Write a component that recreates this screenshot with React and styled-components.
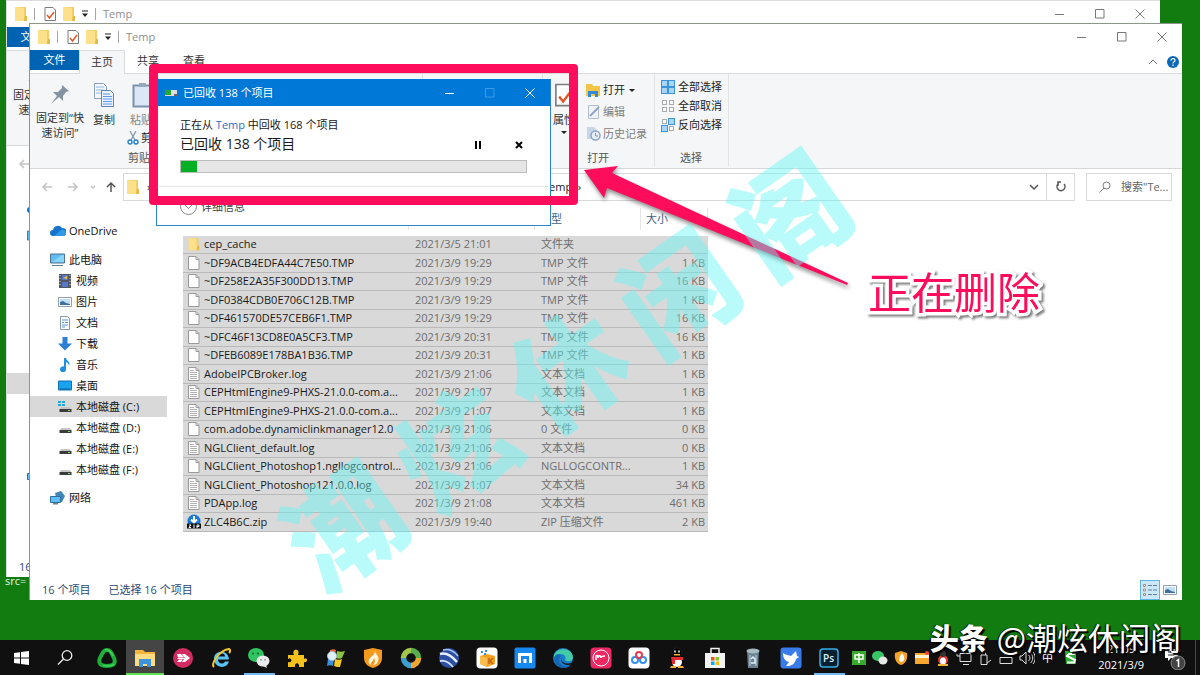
import React from 'react';
import styled, { createGlobalStyle, css } from 'styled-components';

const GlobalStyle = createGlobalStyle`
  * { box-sizing: border-box; }
  body {
    margin: 0;
    background: #127c10;
    font: 11px/16px "Open Sans", "Noto Sans CJK SC", sans-serif;
    color: #1a1a1a;
  }
  button, input {
    font: inherit;
    color: inherit;
    border: 0;
    padding: 0;
    background: none;
  }
  svg { display: block; flex: none; }
`;

/* ---------- icons ---------- */

const FolderIcon = ({ size = 16 }) => (
  <svg width={size} height={size} viewBox="0 0 16 16">
    <path d="M2 1h11v12l-1 2H2z" fill="#f2cf66" />
    <path d="M2 1l9 1v13H2z" fill="#fde08a" />
    <path d="M12 10h2v5h-3z" fill="#e3b94b" />
  </svg>
);

const CheckDocIcon = ({ size = 16 }) => (
  <svg width={size} height={size} viewBox="0 0 16 16" fill="none">
    <path d="M3 1.500h8l2.500 2.500v10.500H3z" fill="#fff" stroke="#7b7b7b" />
    <path d="M5 9l2.500 3L12 6" stroke="#df5a2b" strokeWidth="1.500" />
  </svg>
);

const MenuCaret = () => (
  <svg width="10" height="8" viewBox="0 0 10 8">
    <path d="M2 0.500h6v1H2zM2 3.500h6L5 7z" fill="#222" />
  </svg>
);

const MinIcon = () => (
  <svg width="10" height="10" viewBox="0 0 10 10"><path d="M0 5.500h9" stroke="currentColor" /></svg>
);
const MaxIcon = () => (
  <svg width="10" height="10" viewBox="0 0 10 10"><path d="M.5.5h8.500v8.500H.5z" fill="none" stroke="currentColor" /></svg>
);
const CloseIcon = () => (
  <svg width="10" height="10" viewBox="0 0 10 10"><path d="M.5.5l9 9M9.500.5l-9 9" fill="none" stroke="currentColor" /></svg>
);

const PinIcon = () => (
  <svg width="24" height="24" viewBox="0 0 24 24">
    <path d="M14 3l7 6-3 1-3 4v5l-4-4-8 7 6-8-4-4h5l4-4z" fill="#8593a1" />
  </svg>
);

const CopyIcon = () => (
  <svg width="24" height="26" viewBox="0 0 24 26" fill="none">
    <path d="M2.500 1.500h9l3 3v12h-12z" fill="#f4f8fd" stroke="#8ca0b8" />
    <path d="M4 5h8M4 8h8M4 11h8" stroke="#8fb6e8" />
    <path d="M9.500 8.500h9l3 3v13h-12z" fill="#eaf3fd" stroke="#5f84b5" />
    <path d="M11 12h7M11 14.500h9M11 17h9M11 19.500h9M11 22h9" stroke="#5b9ae6" />
  </svg>
);

const PasteIcon = () => (
  <svg width="24" height="26" viewBox="0 0 24 26" fill="none">
    <path d="M4.500 3.500h18v21h-18z" fill="#dbe7f5" stroke="#7d92ad" strokeWidth="2" />
    <path d="M10 1h7v4h-7z" fill="#98a8bb" />
  </svg>
);

const CutIcon = () => (
  <svg width="12" height="14" viewBox="0 0 12 14" fill="none">
    <path d="M3 0l5 9M9 0L4 9" stroke="#8597a8" strokeWidth="1.300" />
    <circle cx="3" cy="11" r="2" stroke="#2580cf" strokeWidth="1.400" />
    <circle cx="9" cy="11" r="2" stroke="#2580cf" strokeWidth="1.400" />
  </svg>
);

const OpenIcon = () => (
  <svg width="16" height="14" viewBox="0 0 16 14">
    <path d="M1 1h6l1 2h7v10H1z" fill="#f3c544" />
    <path d="M3 14V8h10v6h-3v-3H6v3z" fill="#2f8ade" />
  </svg>
);

const EditIcon = () => (
  <svg width="16" height="14" viewBox="0 0 16 14" fill="none">
    <path d="M3.500.5h10v13h-10z" fill="#f0f4fa" stroke="#b3bfd0" />
    <path d="M5 11l9-9" stroke="#90a5c4" strokeWidth="2" />
  </svg>
);

const HistoryIcon = () => (
  <svg width="16" height="14" viewBox="0 0 16 14" fill="none">
    <path d="M2 0h7l3 3v9H2z" fill="#c9d6e8" />
    <circle cx="10.500" cy="8.500" r="4.500" fill="#e8eef7" stroke="#8ca4c8" strokeWidth="1.500" />
    <path d="M10.500 6v3h2.500" stroke="#7a93b8" />
  </svg>
);

const SelectIcon = ({ on }) => (
  <svg width="15" height="14" viewBox="0 0 15 14">
    {[[0, 0], [7, 0], [0, 7], [7, 7]].map(([x, y], i) => (
      <rect
        key={i}
        x={x + (on[i] ? 0.5 : 1.5)}
        y={y + (on[i] ? 0.5 : 1.5)}
        width={on[i] ? 6 : 4}
        height={on[i] ? 6 : 4}
        fill={on[i] ? '#a9d6f8' : '#fff'}
        stroke={on[i] ? '#3d94da' : '#aaa'} />
    ))}
  </svg>
);

const NavArrow = ({ d, color = '#c4c4c4' }) => (
  <svg width="12" height="12" viewBox="0 0 12 12"><path d={d} fill="none" stroke={color} strokeWidth="1.500" /></svg>
);

const CloudIcon = () => (
  <svg width="16" height="14" viewBox="0 0 16 14">
    <path d="M3 12a3 3 0 010-6 5 5 0 019-2 4 4 0 011 8z" fill="#1674ca" />
    <path d="M4 12l7-6a3 3 0 013 6z" fill="#2e9ae8" />
  </svg>
);
const PcIcon = () => (
  <svg width="16" height="14" viewBox="0 0 16 14">
    <path d="M.5 1h14v9H.5z" fill="#5fbdf4" stroke="#55738c" />
    <path d="M2 9l10-7h2v7z" fill="#8ad6fb" />
    <path d="M2 12h11v1H2z" fill="#5d7f99" />
  </svg>
);
const VideoIcon = () => (
  <svg width="14" height="14" viewBox="0 0 14 14">
    <path d="M1 0h12v14H1z" fill="#525766" />
    <path d="M4 1h6v5H4zM4 8h6v5H4z" fill="#5a78c9" />
    <path d="M5 4l4-2v3z" fill="#ecc646" />
    <path d="M2 1v12M12 1v12" stroke="#ddd" strokeDasharray="1 2" />
  </svg>
);
const ImageIcon = () => (
  <svg width="14" height="14" viewBox="0 0 14 14">
    <path d="M.5 2.500h13v9H.5z" fill="#fff" stroke="#90a0ae" />
    <path d="M2 4h10v6H2z" fill="#bfe0f6" />
    <path d="M2 10V7l3-1 3 2 4 1v1z" fill="#3d6f9d" />
  </svg>
);
const DocIcon = () => (
  <svg width="14" height="14" viewBox="0 0 14 14">
    <path d="M2.500.5h7l2 2v11h-9z" fill="#fff" stroke="#8b97a3" />
    <path d="M4 4h6M4 6.500h2M7 6.500h3M4 9h6M4 11h3" stroke="#4d93ce" />
  </svg>
);
const DownIcon = () => (
  <svg width="14" height="14" viewBox="0 0 14 14"><path d="M4.500 0h5v6.500H14l-7 7-7-7h4.500z" fill="#2c7fd3" /></svg>
);
const MusicIcon = () => (
  <svg width="14" height="14" viewBox="0 0 14 14">
    <path d="M6 0h2c0 3 5 3 3 8 0-2-1-3-3-4v7a3 3 0 11-2-2.500z" fill="#1f8fe0" />
  </svg>
);
const DesktopIcon = () => (
  <svg width="14" height="14" viewBox="0 0 14 14">
    <path d="M.5 2h13v9H.5z" fill="#19a3f0" stroke="#1173b4" />
    <path d="M2 10h10" stroke="#0a5c95" />
  </svg>
);
const DiskIcon = ({ system }) => (
  <svg width="14" height="14" viewBox="0 0 14 14">
    {system && <path d="M0 1h3v2H0zM4 1h3v2H4zM0 4h3v2H0zM4 4h3v2H4z" fill="#1fa8e4" />}
    <path d="M3 7h9l1 2H2z" fill="#c5c5c5" />
    <path d="M1.500 9h12v3h-12z" fill="#3b3b3b" />
    <path d="M10 10h2v1h-2z" fill="#7ddf6b" />
  </svg>
);
const NetIcon = () => (
  <svg width="16" height="14" viewBox="0 0 16 14">
    <path d="M5 2l6-2 4 5-3 6H7z" fill="#3f86b8" />
    <path d="M.5 5.500h10v6H.5z" fill="#5fbdf4" stroke="#2f6f9f" />
    <path d="M3 12h5v1.500H3z" fill="#6d8494" />
  </svg>
);

const FileIcon = ({ lines }) => (
  <svg width="14" height="16" viewBox="0 0 14 16">
    <path d="M1.500 1.500h7.500l3 3v10H1.500z" fill="#fff" stroke="#9a9a9a" />
    <path d="M9 1.500v3h3" fill="none" stroke="#9a9a9a" />
    {lines && <path d="M3 6.500h7M3 8.500h7M3 10.500h7M3 12.500h7M3 4.500h4" stroke="#b3b3b3" />}
  </svg>
);
const ZipIcon = () => (
  <svg width="14" height="16" viewBox="0 0 14 16">
    <circle cx="7" cy="7" r="6.500" fill="#1878d4" />
    <path d="M7 2v6M4 5.500l3 3 3-3" stroke="#fff" strokeWidth="2" fill="none" />
    <path d="M0 9.500h14v5H0z" fill="#111" />
    <path d="M2 11h2l-2 2.500h2M7 10.500v3.500M10 14v-3h2v1.500h-2" stroke="#fff" fill="none" />
  </svg>
);

/* ---------- windows ---------- */

const Screen = styled.div`
  min-height: 100vh;
  display: flex;
  flex-direction: column;
  position: relative;
  overflow: hidden;
`;

const Desktop = styled.main`
  flex: 1;
  position: relative;
`;

const DesktopLabel = styled.span`
  position: absolute;
  left: 5px;
  top: ${(props) => props.$top};
  color: #e6f3e6;
`;

const Window = styled.section`
  position: absolute;
  display: flex;
  flex-direction: column;
  background: #fff;
  border: 1px solid #8d968d;
  border-right: 0;
  border-bottom: 0;
  overflow: hidden;
  ${(props) => (props.$back ? css`
    inset: 0 40px 63px 6px;
    border-color: #dcdcdc;
  ` : css`
    inset: 23px 18px 40px 29px;
  `)}
`;

const TitleBar = styled.header`
  display: flex;
  align-items: center;
  height: 26px;
  flex: none;
  padding-left: 6px;
  color: #8e8e8e;
`;

const QuickBar = styled.div`
  display: flex;
  align-items: center;
  flex: 1;
  gap: 3px;
`;

const Divider = styled.i`
  width: 1px;
  height: 12px;
  background: #a5a5a5;
  margin: 0 4px 0 2px;
`;

const WinButton = styled.button`
  width: 40px;
  height: 26px;
  flex: none;
  display: grid;
  place-items: center;
  color: ${(props) => props.$color || '#777'};
`;

const Tabs = styled.nav`
  display: flex;
  height: 24px;
  flex: none;
  border-bottom: 1px solid #dadbdc;
`;

const Tab = styled.button`
  width: ${(props) => (props.$file ? '49px' : '46px')};
  height: ${(props) => (props.$file ? '20px' : '24px')};
  padding-bottom: ${(props) => (props.$file ? '0' : '2px')};
  color: ${(props) => (props.$file ? '#fff' : '#333')};
  background: ${(props) => (props.$file ? '#0063b1' : 'transparent')};
  ${(props) => props.$active && css`
    background: #f5f6f7;
    border: 1px solid #dadbdc;
    border-bottom: 0;
  `}
`;

const TabsEnd = styled.div`
  margin-left: auto;
  display: flex;
  align-items: center;
  gap: 10px;
  padding-right: 3px;
`;

const Ribbon = styled.div`
  display: flex;
  height: 95px;
  flex: none;
  background: #f5f6f7;
  border-bottom: 1px solid #d6d7d8;
  padding-bottom: 2px;
`;

const Group = styled.div`
  width: ${(props) => props.$width};
  display: flex;
  flex-direction: column;
  flex: none;
  border-right: 1px solid #e2e3e4;
`;

const GroupBody = styled.div`
  display: flex;
  height: 76px;
  padding-left: ${(props) => props.$indent || '0'};
`;

const GroupLabel = styled.div`
  padding-left: ${(props) => props.$indent};
  color: #555;
`;

const BigButton = styled.button`
  display: flex;
  flex-direction: column;
  align-items: center;
  align-self: flex-start;
  width: ${(props) => props.$width};
  padding-top: 8px;
  gap: 4px;
  line-height: 15px;
  white-space: nowrap;
  color: ${(props) => (props.$dim ? '#888' : '#333')};
`;

const Stack = styled.div`
  display: flex;
  flex-direction: column;
  gap: ${(props) => props.$gap};
  padding: ${(props) => props.$pad};
`;

const SmallButton = styled.button`
  display: flex;
  align-items: center;
  gap: 2px;
  height: 16px;
  white-space: nowrap;
  color: ${(props) => (props.$dim ? '#7c7c7c' : '#222')};
`;

const NavRow = styled.div`
  display: flex;
  align-items: center;
  height: 35px;
  flex: none;
  padding: 1px 10px 0 4px;
`;

const NavButton = styled.button`
  width: ${(props) => props.$width};
  height: 27px;
  flex: none;
  display: grid;
  place-items: center;
`;

const AddressBar = styled.div`
  flex: 1;
  min-width: 0;
  display: flex;
  align-items: center;
  height: 28px;
  margin-right: 11px;
  padding-left: 1px;
  border: 1px solid #d9d9d9;
`;

const Crumb = styled.span`
  flex: ${(props) => (props.$width ? `0 0 ${props.$width}` : '1')};
  padding-left: ${(props) => (props.$width ? '6px' : '0')};
  white-space: pre;
`;

const Refresh = styled(NavButton)`
  border-left: 1px solid #d9d9d9;
`;

const Search = styled.label`
  display: flex;
  align-items: center;
  gap: 10px;
  width: 86px;
  height: 28px;
  flex: none;
  padding-left: 12px;
  border: 1px solid #d9d9d9;

  input {
    width: 50px;
    color: #666;
    outline: 0;
  }
  input::placeholder { color: #666; opacity: 1; }
`;

const Body = styled.div`
  flex: 1;
  display: flex;
  min-height: 0;
`;

const Sidebar = styled.ul`
  list-style: none;
  margin: 0;
  padding: 16px 0 0;
  width: 137px;
  flex: none;
`;

const Place = styled.li`
  margin-top: ${(props) => props.$gap || '0'};
  background: ${(props) => (props.$selected ? '#d9d9d9' : 'transparent')};

  a {
    display: flex;
    align-items: center;
    gap: ${(props) => (props.$root ? '3px' : '4px')};
    height: 21px;
    padding-left: ${(props) => (props.$root ? '20px' : '28px')};
    color: #111;
    text-decoration: none;
  }
`;

const FileTable = styled.table`
  width: 525px;
  margin: 4px 0 auto 16px;
  table-layout: fixed;
  border-collapse: separate;
  border-spacing: 0;

  th {
    height: 28px;
    padding: 0;
    vertical-align: top;
    font-weight: 400;
    text-align: left;
    color: #44617f;
  }
  th span {
    display: block;
    height: 22px;
    padding: 3px 5px;
    border-right: 1px solid #e5e5e5;
  }
  tbody tr { height: 18px; }
  tbody tr:nth-child(even) { height: 19px; }
  td {
    padding: 0 0 1px 6px;
    line-height: 16px;
    white-space: nowrap;
    background: #d9d9d9;
    border-bottom: 1px solid #b9b9b9;
    color: #6d6d6d;
  }
  td:first-child { padding-left: 4px; color: #1a1a1a; }
  td:last-child { padding: 0 3px 1px 0; text-align: right; }
`;

const FileName = styled.span`
  display: flex;
  align-items: center;
  gap: 3px;
  height: 16px;
`;

const StatusBar = styled.footer`
  display: flex;
  align-items: center;
  height: 20px;
  flex: none;
  padding-left: 12px;
  gap: 18px;
  color: #2b4a74;
`;

const Views = styled.div`
  display: flex;
  margin-left: auto;
  padding-right: 2px;
`;

const ViewButton = styled.button`
  width: 20px;
  height: 20px;
  display: grid;
  place-items: center;
  border: 1px solid ${(props) => (props.$on ? '#5cb6e6' : 'transparent')};
  background: ${(props) => (props.$on ? '#cce8f8' : 'transparent')};
`;

/* ---------- progress dialog ---------- */

const Dialog = styled.section`
  position: absolute;
  left: 156px;
  top: 79px;
  width: 395px;
  height: 147px;
  background: #fff;
  border: 1px solid #2a84cc;
  border-top: 0;
`;

const DialogTitle = styled.header`
  display: flex;
  align-items: center;
  height: 27px;
  padding-left: 8px;
  gap: 5px;
  background: #0078d7;
  color: #fff;

  h1 { flex: 1; margin: 0; font: inherit; }
`;

const DialogControls = styled.div`
  display: flex;
`;

const DialogBody = styled.div`
  padding: 11px 23px 0;

  p { margin: 0; }
  p a { color: #2f6fc0; text-decoration: none; }
`;

const DialogLine = styled.div`
  display: flex;
  align-items: center;
  height: 22px;
  font-size: 14px;

  p { flex: 1; }
`;

const TinyButton = styled.button`
  width: 41px;
  height: 20px;
  display: grid;
  place-items: center;
`;

const DialogButtons = styled.div`
  display: flex;
  margin-right: -12px;
  padding-top: 2px;
`;

const Progress = styled.div`
  height: 13px;
  margin-top: 5px;
  background: #e6e6e6;
  border: 1px solid #bcbcbc;

  div { height: 11px; background: #06b025; }
`;

const Details = styled.button`
  display: flex;
  align-items: center;
  gap: 4px;
  width: 389px;
  margin: 13px -21px 0;
  padding: 11px 0 0 21px;
  border-top: 1px solid #e3e3e3;
  color: #444;
`;

/* ---------- marks drawn over the desktop ---------- */

const Frame = styled.div`
  position: absolute;
  left: 149px;
  top: 64px;
  width: 429px;
  height: 141px;
  border: 9px solid #fd0d5c;
  border-radius: 4px;
`;

const Arrow = styled.svg`
  position: absolute;
  left: 580px;
  top: 160px;
  filter: drop-shadow(1px 3px 2px rgba(0, 0, 0, 0.45));
`;

const Caption = styled.div`
  position: absolute;
  left: 868px;
  top: 266px;
  font: 43px/58px "Liberation Serif", "Noto Sans CJK SC", serif;
  color: #fd0d5c;
  white-space: nowrap;
  -webkit-text-stroke: 7px #fff;
  paint-order: stroke fill;
  filter: drop-shadow(2px 2px 1px rgba(70, 70, 70, 0.7));
`;

const Watermark = styled.div`
  position: absolute;
  left: 564px;
  top: 366px;
  display: flex;
  gap: 22px;
  transform: translate(-50%, -50%) rotate(-35deg);
  font: 900 114px/114px "Noto Sans CJK SC", sans-serif;
  color: rgba(97, 246, 243, 0.45);
  pointer-events: none;
`;

const Signature = styled.div`
  position: absolute;
  right: 19px;
  bottom: 16px;
  display: flex;
  gap: 9px;
  font: 31px/44px "Noto Sans CJK SC", sans-serif;
  color: #fff;
  text-shadow: 2px 2px 1px #000, -1px 0 1px #000;
  pointer-events: none;
  white-space: nowrap;

  b { font-size: 29px; font-weight: 900; }
`;

/* ---------- taskbar ---------- */

const Taskbar = styled.footer`
  display: flex;
  height: 35px;
  background: #101010;
  color: #fff;
`;

const AppButton = styled.button`
  width: ${(props) => (props.$wide ? '44px' : '38px')};
  height: 35px;
  flex: none;
  display: grid;
  place-items: center;
  background: ${(props) => (props.$open ? '#454545' : 'transparent')};
`;

const RunningMark = styled.i`
  grid-area: 1 / 1;
  align-self: end;
  width: ${(props) => (props.$open ? '38px' : '31px')};
  height: 2px;
  background: ${(props) => (props.$open ? '#5fe04f' : '#76b9ed')};
`;

const AppIcon = styled.svg`
  grid-area: 1 / 1;
`;

const Tray = styled.div`
  display: flex;
  flex: 1;
`;

const TrayButton = styled.button`
  width: 21px;
  height: 35px;
  display: grid;
  place-items: center;
`;

const Clock = styled.time`
  display: flex;
  flex-direction: column;
  align-items: center;
  margin: 1px 19px 0 auto;
`;

const Notice = styled.button`
  width: 24px;
  height: 35px;
  display: grid;
  place-items: center;
  margin-right: 8px;
`;

const ShowDesktop = styled.button`
  width: 5px;
  border-left: 1px solid #4a4a4a;
`;

const TraySvg = ({ children }) => (
  <svg width="16" height="16" viewBox="0 0 16 16" fill="none">{children}</svg>
);

const places = [
  { label: 'OneDrive', icon: <CloudIcon />, root: true },
  { label: '此电脑', icon: <PcIcon />, root: true, gap: '8px' },
  { label: '视频', icon: <VideoIcon /> },
  { label: '图片', icon: <ImageIcon /> },
  { label: '文档', icon: <DocIcon /> },
  { label: '下载', icon: <DownIcon /> },
  { label: '音乐', icon: <MusicIcon /> },
  { label: '桌面', icon: <DesktopIcon /> },
  { label: '本地磁盘 (C:)', icon: <DiskIcon system />, selected: true },
  { label: '本地磁盘 (D:)', icon: <DiskIcon /> },
  { label: '本地磁盘 (E:)', icon: <DiskIcon /> },
  { label: '本地磁盘 (F:)', icon: <DiskIcon /> },
  { label: '网络', icon: <NetIcon />, root: true, gap: '7px' }
];

const files = [
  ['folder', 'cep_cache', '2021/3/5 21:01', '文件夹', ''],
  ['file', '~DF9ACB4EDFA44C7E50.TMP', '2021/3/9 19:29', 'TMP 文件', '1 KB'],
  ['file', '~DF258E2A35F300DD13.TMP', '2021/3/9 19:29', 'TMP 文件', '16 KB'],
  ['file', '~DF0384CDB0E706C12B.TMP', '2021/3/9 19:29', 'TMP 文件', '1 KB'],
  ['file', '~DF461570DE57CEB6F1.TMP', '2021/3/9 19:29', 'TMP 文件', '16 KB'],
  ['file', '~DFC46F13CD8E0A5CF3.TMP', '2021/3/9 20:31', 'TMP 文件', '16 KB'],
  ['file', '~DFEB6089E178BA1B36.TMP', '2021/3/9 20:31', 'TMP 文件', '1 KB'],
  ['text', 'AdobeIPCBroker.log', '2021/3/9 21:06', '文本文档', '1 KB'],
  ['text', 'CEPHtmlEngine9-PHXS-21.0.0-com.a...', '2021/3/9 21:07', '文本文档', '1 KB'],
  ['text', 'CEPHtmlEngine9-PHXS-21.0.0-com.a...', '2021/3/9 21:07', '文本文档', '1 KB'],
  ['file', 'com.adobe.dynamiclinkmanager12.0', '2021/3/9 21:06', '0 文件', '0 KB'],
  ['text', 'NGLClient_default.log', '2021/3/9 21:06', '文本文档', '0 KB'],
  ['file', 'NGLClient_Photoshop1.ngllogcontrol...', '2021/3/9 21:06', 'NGLLOGCONTR...', '1 KB'],
  ['text', 'NGLClient_Photoshop121.0.0.log', '2021/3/9 21:07', '文本文档', '34 KB'],
  ['text', 'PDApp.log', '2021/3/9 21:08', '文本文档', '461 KB'],
  ['zip', 'ZLC4B6C.zip', '2021/3/9 19:40', 'ZIP 压缩文件', '2 KB']
];

const fileIcons = {
  folder: <FolderIcon size={14} />,
  file: <FileIcon />,
  text: <FileIcon lines />,
  zip: <ZipIcon />
};

const apps = [
  { name: '开始', wide: true, icon: <path d="M3 6l6-.8v5.300H3zM10 5l8-1v6.500h-8zM3 11.500h6v5.300L3 16zM10 11.500h8V18l-8-1z" fill="#fff" /> },
  { name: '搜索', wide: true, icon: <g stroke="#eee" strokeWidth="1.300"><circle cx="12" cy="8.500" r="4.800" /><path d="M8.500 12L3 17.500" /></g> },
  { name: '360', icon: <g><path d="M11 3c3 0 4 2 6 6 3 5 2 9-2 9.500-3 .5-6 .5-8 0-4-1-5-5-2-9.500 2-4 3-6 6-6z" stroke="#1fae38" strokeWidth="4" /><path d="M9 3c4-1 6 1 8 6M18 17c-3 3-8 2-11 1.500" stroke="#3fd45d" strokeWidth="1.500" /></g> },
  { name: '文件资源管理器', open: true, running: true, icon: <g><path d="M1 3h8l2 2h10v14H1z" fill="#f3b63d" /><path d="M1 7h20v12H1z" fill="#fcdb85" /><path d="M5 20v-8h12v8h-4v-3H9v3z" fill="#3b94dc" /></g> },
  { name: '向日葵', icon: <g><circle cx="11" cy="11" r="10" fill="#d32c62" /><path d="M5 7h4l3 3-1 .5H6zM10 7h3l5 4-5 4h-3l2-3H5l1-1h7zM5 15h4l2-2.500H7z" fill="#fff" /></g> },
  { name: 'Internet Explorer', icon: <g><path d="M19 12.500H8c0 5 6 5 7 2h4c-3 9-15 6-15-3 0-8 14-10 15 1zM8 9.500h7c0-4-6-4-7 0z" fill="#58c3f2" /><path d="M4 20C0 17 10 3 19 2c2 1 1 3 0 4" stroke="#f4c52f" strokeWidth="2" /></g> },
  { name: '微信', running: true, icon: <g><ellipse cx="8" cy="8" rx="8" ry="7" fill="#2fc45f" /><ellipse cx="15" cy="14" rx="6.500" ry="5.500" fill="#e9ebec" /><path d="M18 18l1 3-4-2z" fill="#e9ebec" /><path d="M5 5.500v2M10 5.500v2" stroke="#17602f" strokeWidth="1.500" /><path d="M13 12v1.500M17 12v1.500" stroke="#777" strokeWidth="1.200" /></g> },
  { name: '插件', icon: <path d="M2 8h6c-3-7 7-7 4 0h6v4c4-3 4 5 0 3v5h-5c1-5-5-5-4 0H2v-5c5 2 4-6 0-3z" fill="#f5c21b" /> },
  { name: '系统工具', icon: <g><path d="M6 3c3-1 4-1 6 0l-1 7c-2-1-4-1-6 0z" fill="#e8642c" /><path d="M13 4c3 1 5 1 8 0l-3 7c-2 1-4 1-6 0z" fill="#8cc63f" /><path d="M4 12c3-1 4-1 6 0l-1 7c-2-1-4-1-6 0z" fill="#3c8fe0" /><path d="M11 12c3 1 5 1 7 0l-2 8c-2 0-4 0-6-1z" fill="#f6c92b" /><circle cx="8" cy="9" r="4.500" fill="#dff1fb" stroke="#9fc4dc" /></g> },
  { name: '火绒安全', icon: <g><path d="M2 3l9-2 9 2v8c0 6-5 9-9 10-4-1-9-4-9-10z" fill="#f59a1c" /><path d="M13 4c1 4 5 6 3 10-1 3-3 4-5 4 3-3 2-5 1-7-1 4-4 4-3 7-4-3-2-6 0-8 2-2 4-3 4-6z" fill="#fff6e4" /></g> },
  { name: '360浏览器', icon: <g strokeWidth="5.500"><path d="M11 3.500A7.500 7.500 0 0118.500 11" stroke="#58b04a" /><path d="M18.500 11A7.500 7.500 0 0111 18.500" stroke="#eea62f" /><path d="M11 18.500A7.500 7.500 0 013.500 11" stroke="#3c9fd0" /><path d="M3.500 11A7.500 7.500 0 0111 3.500" stroke="#a4c64b" /></g> },
  { name: 'Google Earth', icon: <g><circle cx="11" cy="11" r="10" fill="#2a4fa5" /><path d="M2 7c6-2 11 1 17 8" stroke="#e8effa" strokeWidth="2.500" /><path d="M2 14c5-1 9 1 13 6" stroke="#cddcf4" strokeWidth="2" /><path d="M5 3c6-2 12 2 15 6" stroke="#a9c1ea" strokeWidth="1.500" /></g> },
  { name: '软件管家', icon: <g><rect x=".5" y=".5" width="21" height="21" rx="4" fill="#fff" /><path d="M4 9l7-2 8 2v8l-8 3-7-3z" fill="#f4a11f" /><path d="M4 9l7 2v9l-7-3z" fill="#f9bd4e" /><path d="M13 11v6M17 11l-3 3 3 3" stroke="#c7641a" strokeWidth="1.500" /><path d="M5 5h2M9 4h2M8 7h2" stroke="#3a91e0" strokeWidth="2" /></g> },
  { name: '傲游', icon: <g><rect x=".5" y=".5" width="21" height="21" rx="2" fill="#1688f0" /><path d="M5.500 16V7.500h11V16M11 16v-4" stroke="#fff" strokeWidth="3" /></g> },
  { name: 'Edge', icon: <g><circle cx="11" cy="11" r="10" fill="#1a7fc8" /><path d="M2 8c3-8 18-8 19 2 0 5-5 5-8 3 2-3-1-6-4-6-3 0-6 1-7 4z" fill="#43cba8" /><path d="M9 9c-5 5 0 12 9 10-7 5-16 0-16-8 1-4 5-5 7-2z" fill="#1567b5" /><path d="M10 10c-2 4 2 8 9 6l2-1-1 2c-7 3-13-2-10-7z" fill="#101010" /></g> },
  { name: '美图', icon: <g><rect x=".5" y=".5" width="21" height="21" rx="4" fill="#ee2862" /><circle cx="11" cy="11" r="8" stroke="#fff" /><path d="M6 13V9c2-1 2 0 2 2 0-3 3-3 3 0 0-2 2-2 4-2" stroke="#fff" strokeWidth="1.500" /></g> },
  { name: '百度网盘', icon: <g><rect x=".5" y=".5" width="21" height="21" rx="4" fill="#fff" /><g strokeWidth="2"><circle cx="7" cy="13" r="3" stroke="#3291f3" /><circle cx="15" cy="13" r="3" stroke="#3291f3" /><circle cx="11" cy="8" r="3" stroke="#e6394b" /></g></g> },
  { name: 'QQ', icon: <g><ellipse cx="11" cy="13" rx="7" ry="6" fill="#050505" /><ellipse cx="11" cy="15" rx="5" ry="5" fill="#fff" /><ellipse cx="11" cy="6" rx="5" ry="5" fill="#050505" stroke="#333" strokeWidth=".5" /><path d="M5 10h12v3H9v4H6z" fill="#e5282f" /><path d="M8 7h6v1.500H8zM5 19h5v2H4zM12 19h5l1 2h-6z" fill="#f6b02d" /><path d="M9 3.500v2M13 3.500v2" stroke="#fff" strokeWidth="1.500" /></g> },
  { name: 'Microsoft Store', icon: <g><path d="M1 6h20v15H1z" fill="#f2f2f2" /><path d="M7 6V1.500h8V6" stroke="#f2f2f2" strokeWidth="1.500" /><path d="M7 10h3.500v3.500H7z" fill="#f1511b" /><path d="M11.500 10H15v3.500h-3.500z" fill="#80cc28" /><path d="M7 14.500h3.500V18H7z" fill="#00adef" /><path d="M11.500 14.500H15V18h-3.500z" fill="#fbbc09" /></g> },
  { name: '回收站', icon: <g><path d="M5 4h12l-1 17H6z" fill="#688292" /><ellipse cx="11" cy="4" rx="6.500" ry="2.500" fill="#a8bac4" /><path d="M8 8v11M14 8v11" stroke="#c3d3dc" /><path d="M9 12l2-2 2 2v4h-4" stroke="#dff0f8" strokeWidth="1.500" /></g> },
  { name: '迅雷', icon: <g><rect x=".5" y=".5" width="21" height="21" rx="3" fill="#3a7bea" /><path d="M3 6c3 2 6 2 8 3l5-5 1 5 2 1-3 2c-1 4-3 6-7 7H6l3-4c-4-1-6-4-6-9z" fill="#fff" /></g> },
  { name: 'Photoshop', running: true, icon: <g><rect x="2" y="2" width="18" height="18" rx="3" fill="#06202f" stroke="#34aee6" strokeWidth="1.500" /><text x="5" y="15" fontSize="10" fontWeight="600" fill="#dff4ff">Ps</text></g> }
];

const trayItems = [
  ['输入法', <g><path d="M1 1h14v14H1z" fill="#37ab2c" /><path d="M4 5h8v4H4zM8 3v10" stroke="#fff" strokeWidth="1.500" /></g>],
  ['微信', <g><ellipse cx="6" cy="6" rx="6" ry="5" fill="#37c566" /><ellipse cx="11" cy="10.500" rx="4.500" ry="4" fill="#e6e8e8" /></g>],
  ['安全', <g><path d="M2 3l6-2 6 2c1 7-2 11-6 12-4-1-7-5-6-12z" fill="#f5a123" /><path d="M9 3c4 5 2 9-1 9-3-1-2-5 1-9z" fill="#fff" /></g>],
  ['钱包', <g><path d="M1 3h14v11H1z" fill="#f6a92e" /><path d="M1 5h14v3H1z" fill="#fff3d7" /><circle cx="13" cy="3" r="2" fill="#f03d3a" /></g>],
  ['QQ', <g><ellipse cx="8" cy="10" rx="5" ry="5" fill="#e8332f" /><ellipse cx="8" cy="11" rx="3" ry="3.500" fill="#fff" /><circle cx="8" cy="4" r="3" fill="#333" /><path d="M3 14h10v2H3z" fill="#f5b133" /></g>],
  ['网络', <path d="M4 3.500h11v8H4zM7 14.500h6M1 2v4h3" stroke="#ddd" />],
  ['USB', <path d="M4 5h6v9.500H4zM5.500 2h3v3M10 13l4-3" stroke="#ddd" />],
  ['电源', <path d="M2 7.500h12v6H2zM6 4h5" stroke="#ddd" />],
  ['音量', <path d="M1 6h2l4-4v12l-4-4H1zM9.500 5c2 2 2 4 0 6M11.500 3c3 3 3 7 0 10M14 2c3 4 3 8 0 12" stroke="#ddd" />]
];

const WindowButtons = () => (
  <>
    <WinButton aria-label="最小化"><MinIcon /></WinButton>
    <WinButton aria-label="最大化"><MaxIcon /></WinButton>
    <WinButton aria-label="关闭"><CloseIcon /></WinButton>
  </>
);

// The window behind shows only a strip along its top and left edge
const Explorer = ({ back }) => (
  <Window $back={back}>
    <TitleBar>
      <QuickBar>
        <FolderIcon />
        <Divider />
        <CheckDocIcon />
        <FolderIcon />
        <MenuCaret />
        <Divider />
        <span>Temp</span>
      </QuickBar>
      <WindowButtons />
    </TitleBar>
    <Tabs>
      <Tab $file>文件</Tab>
      {!back && (
        <>
          <Tab $active>主页</Tab>
          <Tab>共享</Tab>
          <Tab>查看</Tab>
          <TabsEnd>
            <svg width="8" height="6" viewBox="0 0 8 6"><path d="M0 5l4-4 4 4" fill="none" stroke="#777" /></svg>
            <svg width="12" height="12" viewBox="0 0 12 12">
              <circle cx="6" cy="6" r="6" fill="#0a67b8" />
              <path d="M4 4.500c0-2.500 4-2.500 4 0C8 6 6 5.500 6 7.500M6 8.500V10" fill="none" stroke="#fff" strokeWidth="1.200" />
            </svg>
          </TabsEnd>
        </>
      )}
    </Tabs>
    <Ribbon>
      <Group $width="393px">
        <GroupBody>
          <BigButton $width="60px"><PinIcon /><span>固定到“快<br />速访问”</span></BigButton>
          {!back && (
            <>
              <BigButton $width="28px"><CopyIcon />复制</BigButton>
              <Stack $gap="3px" $pad="0 0 0 9px">
                <BigButton $width="28px" $dim><PasteIcon />粘贴</BigButton>
                <SmallButton><CutIcon />剪切</SmallButton>
              </Stack>
            </>
          )}
        </GroupBody>
        {!back && <GroupLabel $indent="98px">剪贴板</GroupLabel>}
      </Group>
      {!back && (
        <>
          <Group $width="120px" />
          <Group $width="112px">
            <GroupBody>
              <BigButton $width="42px">
                <CheckDocIcon size={26} />
                属性
                <svg width="6" height="3" viewBox="0 0 6 3"><path d="M0 0h6L3 3z" fill="#222" /></svg>
              </BigButton>
              <Stack $gap="6px" $pad="8px 0 0">
                <SmallButton><OpenIcon />打开 <svg width="8" height="3" viewBox="0 0 8 3"><path d="M2 0h6L5 3z" fill="#222" /></svg></SmallButton>
                <SmallButton $dim><EditIcon />编辑</SmallButton>
                <SmallButton $dim><HistoryIcon />历史记录</SmallButton>
              </Stack>
            </GroupBody>
            <GroupLabel $indent="44px">打开</GroupLabel>
          </Group>
          <Group $width="74px">
            <GroupBody $indent="6px">
              <Stack $gap="3px" $pad="5px 0 0">
                <SmallButton><SelectIcon on={[1, 1, 1, 1]} />全部选择</SmallButton>
                <SmallButton><SelectIcon on={[0, 0, 0, 0]} />全部取消</SmallButton>
                <SmallButton><SelectIcon on={[0, 1, 1, 0]} />反向选择</SmallButton>
              </Stack>
            </GroupBody>
            <GroupLabel $indent="25px">选择</GroupLabel>
          </Group>
        </>
      )}
    </Ribbon>
    <NavRow>
      <NavButton $width="25px" aria-label="后退"><NavArrow d="M11 6H2M6 2L2 6l4 4" /></NavButton>
      <NavButton $width="28px" aria-label="前进"><NavArrow d="M1 6h9M6 2l4 4-4 4" /></NavButton>
      <NavButton $width="12px" aria-label="最近"><NavArrow d="M4 5l2 2 2-2" /></NavButton>
      <NavButton $width="24px" aria-label="向上"><NavArrow d="M6 11V2M2 6l4-4 4 4" color="#555" /></NavButton>
      {!back && (
        <>
          <AddressBar>
            <FolderIcon />
            <Crumb $width="402px">›</Crumb>
            <Crumb>Temp  ›</Crumb>
            <NavButton $width="24px" aria-label="历史位置"><NavArrow d="M2 4l4 4 4-4" color="#555" /></NavButton>
            <Refresh $width="28px" aria-label="刷新"><NavArrow d="M3 3a4 4 0 106 0M6 1L3 1v4" color="#555" /></Refresh>
          </AddressBar>
          <Search>
            <svg width="12" height="12" viewBox="0 0 12 12" fill="none" stroke="#777">
              <circle cx="7.500" cy="4.500" r="3.500" />
              <path d="M5 7l-4.500 4.500" />
            </svg>
            <input aria-label="搜索" placeholder="搜索&quot;Te..." />
          </Search>
        </>
      )}
    </NavRow>
    <Body>
      <Sidebar>
        {places.map((place) => (
          <Place key={place.label} $root={place.root} $gap={place.gap} $selected={place.selected}>
            <a href="#place" aria-label={place.label}>{place.icon}{!back && place.label}</a>
          </Place>
        ))}
      </Sidebar>
      {!back && (
        <FileTable>
          <colgroup>
            <col width="226" />
            <col width="126" />
            <col width="106" />
            <col width="67" />
          </colgroup>
          <thead>
            <tr>
              <th><span /></th>
              <th><span /></th>
              <th><span>类型</span></th>
              <th><span>大小</span></th>
            </tr>
          </thead>
          <tbody>
            {files.map(([kind, name, date, type, size], index) => (
              <tr key={index}>
                <td><FileName>{fileIcons[kind]}{name}</FileName></td>
                <td>{date}</td>
                <td>{type}</td>
                <td>{size}</td>
              </tr>
            ))}
          </tbody>
        </FileTable>
      )}
    </Body>
    <StatusBar>
      <span>16 个项目</span>
      {!back && (
        <>
          <span>已选择 16 个项目</span>
          <Views>
            <ViewButton $on aria-label="详细信息">
              <svg width="16" height="14" viewBox="0 0 16 14">
                <path d="M1.500 1.500h2v2h-2zM1.500 6h2v2h-2zM1.500 10.500h2v2h-2z" fill="#fff" stroke="#b08b7a" />
                <path d="M6 2.500h4M6 7h4M6 11.500h4M11 2.500h4M11 7h4M11 11.500h4" stroke="#5d7ea3" />
              </svg>
            </ViewButton>
            <ViewButton aria-label="缩略图"><ImageIcon /></ViewButton>
          </Views>
        </>
      )}
    </StatusBar>
  </Window>
);

const RecycleDialog = () => {
  const percent = 4.5;

  return (
    <Dialog role="dialog">
      <DialogTitle>
        <svg width="13" height="8" viewBox="0 0 13 8">
          <path d="M0 1h12v6H0z" fill="#d9dde0" />
          <path d="M0 1h6v5H0z" fill="#25a531" />
          <path d="M9 5h3v2H9z" fill="#666" />
        </svg>
        <h1>已回收 138 个项目</h1>
        <DialogControls>
          <WinButton $color="#fff" aria-label="最小化"><MinIcon /></WinButton>
          <WinButton $color="#3a9be6" aria-label="最大化" disabled><MaxIcon /></WinButton>
          <WinButton $color="#fff" aria-label="关闭"><CloseIcon /></WinButton>
        </DialogControls>
      </DialogTitle>
      <DialogBody>
        <p>正在从 <a href="#temp">Temp</a> 中回收 168 个项目</p>
        <DialogLine>
          <p>已回收 138 个项目</p>
          <DialogButtons>
            <TinyButton aria-label="暂停">
              <svg width="8" height="8" viewBox="0 0 8 8"><path d="M2 0v8M6 0v8" stroke="#000" strokeWidth="2" /></svg>
            </TinyButton>
            <TinyButton aria-label="取消">
              <svg width="8" height="8" viewBox="0 0 8 8"><path d="M1 1l6 6M7 1L1 7" stroke="#000" strokeWidth="2" /></svg>
            </TinyButton>
          </DialogButtons>
        </DialogLine>
        <Progress role="progressbar">
          <div style={{ width: `${percent}%` }} />
        </Progress>
        <Details>
          <svg width="17" height="17" viewBox="0 0 17 17" fill="none" stroke="#888">
            <circle cx="8.500" cy="8.500" r="8" />
            <path d="M5 7l3.500 3.500L12 7" />
          </svg>
          详细信息
        </Details>
      </DialogBody>
    </Dialog>
  );
};

const App = () => (
  <Screen>
    <GlobalStyle />
    <Desktop>
      <DesktopLabel $top="573px">src=</DesktopLabel>
      <Explorer back />
      <Explorer />
      <RecycleDialog />
      <Frame />
      <Arrow width="280" height="140" viewBox="0 0 280 140">
        <path d="M4 10l34-4-6 7 236 110-1 2L27 28l-3 10z" fill="#fd0d5c" />
      </Arrow>
      <Watermark>
        {['潮', '炫', '休', '闲', '阁'].map((char) => <span key={char}>{char}</span>)}
      </Watermark>
      <Caption>正在删除</Caption>
    </Desktop>
    <Taskbar>
      {apps.map((app) => (
        <AppButton key={app.name} aria-label={app.name} $wide={app.wide} $open={app.open}>
          <AppIcon width="22" height="22" viewBox="0 0 22 22" fill="none">{app.icon}</AppIcon>
          {app.running && <RunningMark $open={app.open} />}
        </AppButton>
      ))}
      <Tray>
        {trayItems.map(([name, icon]) => (
          <TrayButton key={name} aria-label={name}><TraySvg>{icon}</TraySvg></TrayButton>
        ))}
        <TrayButton>中</TrayButton>
        <TrayButton aria-label="搜狗输入法">
          <TraySvg>
            <path d="M4 1h11v13H5z" fill="#2fae2f" />
            <path d="M14 4H8L6 6l8 4-1 2.500H6" stroke="#fff" strokeWidth="2" />
          </TraySvg>
        </TrayButton>
        <Clock>
          <span>21:09</span>
          <span>2021/3/9</span>
        </Clock>
        <Notice aria-label="通知">
          <svg width="24" height="24" viewBox="0 0 24 24">
            <path d="M2 3h13v9H8l-3 3v-3H2z" fill="#fff" />
            <path d="M5 6h8M5 9h6" stroke="#222" />
            <circle cx="15" cy="17" r="7" fill="#444" stroke="#888" />
            <path d="M13.500 15l2-1.500V21" fill="none" stroke="#fff" strokeWidth="1.500" />
          </svg>
        </Notice>
        <ShowDesktop aria-label="显示桌面" />
      </Tray>
    </Taskbar>
    <Signature>
      <b>头条</b>
      <span>@潮炫休闲阁</span>
    </Signature>
  </Screen>
);

export default App;
